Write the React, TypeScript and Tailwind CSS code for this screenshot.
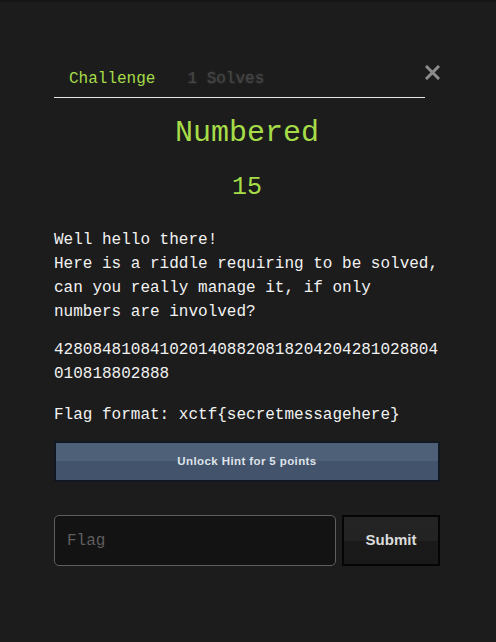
const MONO = "font-['Liberation_Mono','DejaVu_Sans_Mono',monospace]";
const SANS = "font-['Liberation_Sans',Arial,sans-serif]";

export default function App() {
  return (
    <div className={`min-h-screen w-full bg-[#1c1c1c] text-[#f2f2f2] ${MONO}`}>
      <div className="border-t-2 border-[#151515]" />
      <div className="pl-[54px] pr-[56px] pt-[55px]">
        {/* tabs + close */}
        <div className="flex items-start">
          <div className="flex flex-1 border-b border-[#e6e6e6]">
            <div className="px-[15px] pt-[10px] pb-[6px] text-[16px] leading-6 text-[#a6dc48]">Challenge</div>
            <div className="ml-[2px] px-[15px] pt-[10px] pb-[6px] text-[16px] leading-6 text-[#474747] [text-shadow:0_0_3px_#3a3a3a]">
              1 Solves
            </div>
          </div>
          <button className="mt-[6px] flex h-[18px] w-[15px] items-center justify-center text-[#8c8c8c]">
            <svg width="15" height="15" viewBox="0 0 15 15">
              <path d="M2 2 L13 13 M13 2 L2 13" stroke="currentColor" strokeWidth="3" strokeLinecap="square" />
            </svg>
          </button>
        </div>

        <h1 className="mt-[15px] text-center text-[30px] leading-10 text-[#a6dc48]">Numbered</h1>
        <div className="mt-[19px] text-center text-[25px] leading-8 text-[#a6dc48]">15</div>

        <div className="mt-6 text-[16px] leading-6">
          <p>
            Well hello there!
            <br />
            Here is a riddle requiring to be solved,
            <br />
            can you really manage it, if only
            <br />
            numbers are involved?
          </p>
          <p className="mt-[14px] break-all">4280848108410201408820818204204281028804010818802888</p>
          <p className="mt-[17px]">Flag format: xctf&#123;secretmessagehere&#125;</p>
        </div>

        <button
          className={`mt-[14px] flex h-[41px] w-full items-center justify-center border-2 border-[#111821] bg-[linear-gradient(#4e5f78_0%,#4e5f78_50%,#43536b_50%,#43536b_100%)] text-[11.5px] font-bold tracking-[0.4px] text-[#dfe4ea] ${SANS}`}
        >
          Unlock Hint for 5 points
        </button>

        <div className="mt-[33px] flex gap-[6px]">
          <input
            placeholder="Flag"
            className={`h-[51px] flex-1 rounded-[5px] border border-[#5e5e5e] bg-[#131313] px-3 text-[16px] text-[#eee] outline-none placeholder:text-[#5f5f5f] ${MONO}`}
          />
          <button
            className={`h-[51px] w-[98px] border-2 border-[#050505] bg-[linear-gradient(#242424_0%,#232323_50%,#1a1a1a_50%,#191919_100%)] text-[15px] font-bold text-[#dcdcdc] ${SANS}`}
          >
            Submit
          </button>
        </div>
      </div>
    </div>
  );
}
